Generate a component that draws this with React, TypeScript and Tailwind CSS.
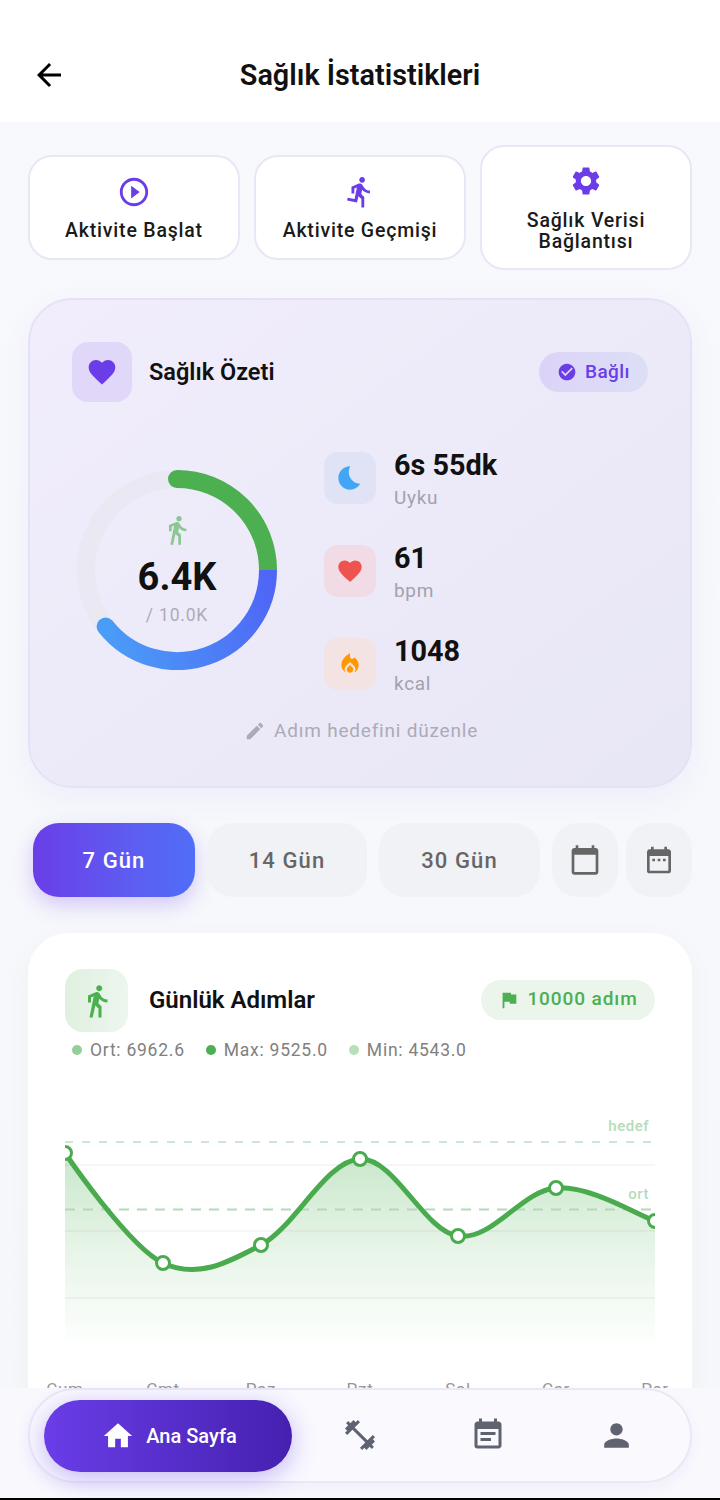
import React from "react";
import {
  MdArrowBack, MdOutlinePlayCircleOutline, MdDirectionsRun, MdSettings, MdFavorite, MdCheckCircle,
  MdDirectionsWalk, MdBedtime, MdLocalFireDepartment, MdEdit, MdDateRange, MdCalendarToday, MdFlag, MdHome,
  MdFitnessCenter, MdEventNote, MdPerson,
} from "react-icons/md";

const pts: [number, number][] = [
  [0, 93], [98, 203], [196, 185], [295, 99], [393, 176], [491, 128], [590, 161],
];

function curve(): string {
  const s = 0.35;
  let d = `M${pts[0][0]} ${pts[0][1]}`;
  let tempX = 0, tempY = 0;
  for (let i = 1; i < pts.length; i++) {
    const cur = pts[i];
    const prev = pts[i - 1];
    const next = pts[Math.min(i + 1, pts.length - 1)];
    const c1x = prev[0] + tempX, c1y = prev[1] + tempY;
    tempX = ((next[0] - prev[0]) / 2) * s;
    tempY = ((next[1] - prev[1]) / 2) * s;
    d += ` C${c1x} ${c1y} ${cur[0] - tempX} ${cur[1] - tempY} ${cur[0]} ${cur[1]}`;
  }
  return d;
}

function Chart() {
  const d = curve();
  const days = ["Cum", "Cmt", "Paz", "Pzt", "Sal", "Çar", "Per"];
  return (
    <svg width="664" height="345" viewBox="-37 0 664 345" className="block" style={{ fontFamily: "Roboto, sans-serif" }}>
      <defs>
        <linearGradient id="area" x1="0" y1="0" x2="0" y2="1">
          <stop offset="0" stopColor="#4caf50" stopOpacity="0.3" />
          <stop offset="0.5" stopColor="#4caf50" stopOpacity="0.13" />
          <stop offset="1" stopColor="#4caf50" stopOpacity="0" />
        </linearGradient>
        <clipPath id="plot"><rect x="0" y="0" width="590" height="320" /></clipPath>
      </defs>
      <g clipPath="url(#plot)">
        <path d={`${d} L590 290 L0 290 Z`} fill="url(#area)" />
        <path d="M0 105H590M0 171H590M0 238H590" stroke="#000" strokeOpacity="0.05" strokeWidth="1.5" />
        <path d="M0 82H590" stroke="#cfe6d2" strokeWidth="2" strokeDasharray="8 9" />
        <path d="M0 149.500H590" stroke="#b4dab7" strokeWidth="2" strokeDasharray="10 8" />
        <path d={d} fill="none" stroke="#4aab4e" strokeWidth="5" strokeLinecap="round" />
        {pts.map(([x, y]) => (
          <circle key={x} cx={x} cy={y} r="6.500" fill="#fff" stroke="#4aab4e" strokeWidth="3" />
        ))}
      </g>
      <text x="584" y="71" textAnchor="end" fontSize="15" fontWeight="500" letterSpacing="0.5" fill="#b5dcb8">hedef</text>
      <text x="584" y="139" textAnchor="end" fontSize="15" fontWeight="500" letterSpacing="0.5" fill="#b5dcb8">ort</text>
      {days.map((t, i) => (
        <text key={t} x={pts[i][0]} y="335" textAnchor="middle" fontSize="17" letterSpacing="0.7" fill="#999">{t}</text>
      ))}
    </svg>
  );
}

function Ring() {
  return (
    <div className="relative w-[200px] h-[200px] shrink-0">
      <svg width="200" height="200" viewBox="0 0 200 200" className="block">
        <defs>
          <linearGradient id="blue" gradientUnits="userSpaceOnUse" x1="190" y1="100" x2="24" y2="160">
            <stop offset="0" stopColor="#4f65f6" />
            <stop offset="1" stopColor="#4a9df6" />
          </linearGradient>
        </defs>
        <circle cx="100" cy="100" r="91" fill="none" stroke="#eae8f2" strokeWidth="18" />
        <path d="M100 9A91 91 0 0 1 191 100" fill="none" stroke="#4caf50" strokeWidth="18" />
        <circle cx="100" cy="9" r="9" fill="#4caf50" />
        <path d="M191 100A91 91 0 0 1 28.600 156.500" fill="none" stroke="url(#blue)" strokeWidth="18" />
        <circle cx="28.600" cy="156.500" r="9" fill="#4a9df6" />
      </svg>
      <div className="absolute inset-0 flex flex-col items-center pt-[44px]">
        <MdDirectionsWalk className="w-[32px] h-[32px] text-[#4caf50] opacity-60" />
        <div className="text-[38px] leading-[44px] font-bold text-[#111] mt-[9px]">6.4K</div>
        <div className="text-[17.500px] leading-[20px] text-[#adabb8] tracking-[0.8px] mt-[6px]">/ 10.0K</div>
      </div>
    </div>
  );
}

function Stat({ icon, bg, value, label }: { icon: React.ReactNode; bg: string; value: string; label: string }) {
  return (
    <div className="flex items-start gap-[18px] h-[65px]">
      <div className={`w-[52px] h-[52px] rounded-[14px] flex items-center justify-center mt-[4px] ${bg}`}>{icon}</div>
      <div>
        <div className="text-[28.800px] leading-[34px] font-bold text-[#111]">{value}</div>
        <div className="text-[19px] leading-[26px] text-[#a3a1ae] tracking-[0.7px] mt-[3px]">{label}</div>
      </div>
    </div>
  );
}

function Action({ icon, label, tall }: { icon: React.ReactNode; label: React.ReactNode; tall?: boolean }) {
  return (
    <div className={`flex-1 bg-white border-2 border-[#e9e6f6] rounded-[24px] flex flex-col items-center ${tall ? "h-[125px] pt-[17px]" : "h-[105px] pt-[18px]"}`}>
      {icon}
      <div className={`${tall ? "mt-[12px]" : "mt-[11px]"} text-[19.500px] leading-[21px] font-medium text-[#1a1a1a] text-center tracking-[0.8px]`}>{label}</div>
    </div>
  );
}

function Period({ label, active, w }: { label: React.ReactNode; active?: boolean; w: string }) {
  return (
    <div className={`h-[74px] rounded-[26px] flex items-center justify-center text-[22px] font-medium tracking-[1.1px] ${w} ${active ? "bg-gradient-to-r from-[#6a3de8] to-[#4f6ef7] text-white shadow-[0_8px_20px_rgba(106,61,232,0.25)]" : "bg-[#f1f2f5] text-[#666]"}`}>
      {label}
    </div>
  );
}

export default function App() {
  return (
    <div className="w-[720px] h-[1500px] flex flex-col overflow-hidden bg-gradient-to-b from-[#f8f9fd] to-[#f5f7fa] font-['Roboto',sans-serif]">
      <header className="h-[122px] shrink-0 bg-white relative flex items-center justify-center pt-[28px]">
        <MdArrowBack className="absolute left-[31px] top-[57px] w-[36px] h-[36px] text-black" />
        <h1 className="text-[28.800px] leading-[34px] font-semibold text-[#111]">Sağlık İstatistikleri</h1>
      </header>

      <main className="flex-1 min-h-0 overflow-hidden px-[28px] pt-[23px]">
        <div className="flex items-center gap-[14px]">
          <Action label="Aktivite Başlat" icon={<MdOutlinePlayCircleOutline className="w-[34px] h-[34px] text-[#6a3de8]" />} />
          <Action label="Aktivite Geçmişi" icon={<MdDirectionsRun className="w-[34px] h-[34px] text-[#6a3de8]" />} />
          <Action tall label={<>Sağlık Verisi<br />Bağlantısı</>} icon={<MdSettings className="w-[34px] h-[34px] text-[#6a3de8]" />} />
        </div>

        <section className="mt-[28px] h-[490px] rounded-[44px] border-2 border-[#e5e1f6] bg-gradient-to-br from-[#f1edfc] to-[#e8e7f5] shadow-[0_10px_30px_rgba(106,61,232,0.06)] px-[42px] pt-[42px]">
          <div className="flex items-center">
            <div className="w-[60px] h-[60px] rounded-[16px] bg-[#e0d7f9] flex items-center justify-center">
              <MdFavorite className="w-[32px] h-[32px] text-[#6a3de8]" />
            </div>
            <div className="ml-[17px] mt-[2px] text-[23.500px] font-semibold text-[#111]">Sağlık Özeti</div>
            <div className="ml-auto h-[40px] w-[109px] rounded-[20px] bg-gradient-to-r from-[#dcd3f8] to-[#dcdff6] flex items-center justify-center gap-[8px] text-[19px] font-medium tracking-[0.4px] text-[#6a3de8]">
              <MdCheckCircle className="w-[20px] h-[20px]" />
              Bağlı
            </div>
          </div>
          <div className="flex items-start mt-[46px]">
            <div className="mt-[22px] ml-[5px]"><Ring /></div>
            <div className="ml-[47px] flex flex-col gap-[28px]">
              <Stat bg="bg-[#dfe3f5]" value="6s 55dk" label="Uyku" icon={<MdBedtime className="w-[28px] h-[28px] text-[#42a5f5]" />} />
              <Stat bg="bg-[#f1dbe5]" value="61" label="bpm" icon={<MdFavorite className="w-[28px] h-[28px] text-[#ef5350]" />} />
              <Stat bg="bg-[#f3e4e3]" value="1048" label="kcal" icon={<MdLocalFireDepartment className="w-[26px] h-[26px] text-[#ff9800]" />} />
            </div>
          </div>
          <div className="flex items-center justify-center gap-[8px] mt-[18px] ml-[2px] text-[19px] text-[#acaab8] tracking-[0.8px]">
            <MdEdit className="w-[22px] h-[22px]" />
            Adım hedefini düzenle
          </div>
        </section>

        <div className="mt-[35px] ml-[5px] flex items-center">
          <Period active w="w-[162px]" label="7 Gün" />
          <Period w="w-[160px] ml-[12px]" label="14 Gün" />
          <Period w="w-[161px] ml-[12px]" label="30 Gün" />
          <Period w="w-[66px] ml-[12px]" label={<MdCalendarToday className="w-[32px] h-[32px]" />} />
          <Period w="w-[66px] ml-[8px]" label={<MdDateRange className="w-[32px] h-[32px]" />} />
        </div>

        <section className="mt-[36px] h-[600px] rounded-[40px] bg-white shadow-[0_8px_30px_rgba(0,0,0,0.03)]">
          <div className="flex items-center px-[37px] pt-[36px]">
            <div className="w-[63px] h-[63px] rounded-[18px] bg-gradient-to-r from-[#dff0e0] to-[#edf6ee] flex items-center justify-center">
              <MdDirectionsWalk className="w-[36px] h-[36px] text-[#4caf50]" />
            </div>
            <div className="ml-[21px] -mt-[2px] text-[24px] font-semibold text-[#111]">Günlük Adımlar</div>
            <div className="ml-auto -mt-[2px] h-[40px] w-[174px] rounded-[20px] bg-[#ebf5ec] flex items-center justify-center gap-[7px] text-[19px] font-medium text-[#4caf50] tracking-[0.9px]">
              <MdFlag className="w-[22px] h-[22px]" />
              10000 adım
            </div>
          </div>
          <div className="flex items-center gap-[21px] ml-[44px] mt-[7px] text-[17.500px] leading-[22px] text-[#808080] tracking-[0.75px]">
            <span className="flex items-center gap-[8px]"><i className="w-[10px] h-[10px] rounded-full bg-[#94cf97]" />Ort: 6962.6</span>
            <span className="flex items-center gap-[8px]"><i className="w-[10px] h-[10px] rounded-full bg-[#4caf50]" />Max: 9525.0</span>
            <span className="flex items-center gap-[8px]"><i className="w-[10px] h-[10px] rounded-full bg-[#b7dfb9]" />Min: 4543.0</span>
          </div>
          <div className="-mt-[1px]">
            <Chart />
          </div>
        </section>
      </main>

      <nav className="h-[110px] shrink-0 bg-[#f9f9fd] relative px-[28px]">
        <div className="h-[95px] rounded-[48px] border-2 border-[#ebe8f6] bg-[#f9f9fe] flex items-center pl-[14px] shadow-[0_6px_16px_rgba(106,61,232,0.06)]">
          <div className="w-[248px] h-[72px] rounded-[36px] bg-gradient-to-r from-[#6a3de8] to-[#4520b0] flex items-center justify-center gap-[11px] pl-[2px] text-white text-[20px] font-medium shadow-[0_6px_24px_rgba(106,61,232,0.35)]">
            <MdHome className="w-[34px] h-[34px]" />
            Ana Sayfa
          </div>
          <div className="flex-1 grid grid-cols-3 text-[#5f6270] pl-[4px] pr-[10px]">
            <div className="flex justify-center"><MdFitnessCenter className="w-[36px] h-[36px]" /></div>
            <div className="flex justify-center"><MdEventNote className="w-[36px] h-[36px]" /></div>
            <div className="flex justify-center"><MdPerson className="w-[37px] h-[37px]" /></div>
          </div>
        </div>
      </nav>
      <div className="h-[2px] shrink-0 bg-black" />
    </div>
  );
}
